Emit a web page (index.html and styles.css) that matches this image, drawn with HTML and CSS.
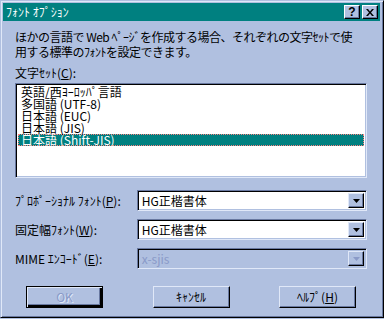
FILE: index.html
```html
<!DOCTYPE html>
<html lang="ja">
<head>
    <meta charset="UTF-8">
    <title>フォント オプション</title>
    <link rel="stylesheet" href="styles.css">
</head>
<body>
    <div class="window">
        <div class="titlebar">
            <span class="title">ﾌｫﾝﾄ ｵﾌﾟｼｮﾝ</span>
            <div class="title-buttons">
                <div class="tbtn help">?</div>
                <div class="tbtn">
                    <svg width="8" height="7" viewBox="0 0 8 7">
                        <path d="M0 0h2l2 2.5 2-2.5h2l-3 3.5 3 3.5h-2l-2-2.5-2 2.5h-2l3-3.5z" fill="#000"/>
                    </svg>
                </div>
            </div>
        </div>

        <div class="content">
            <p class="desc">ほかの言語で Web ﾍﾟｰｼﾞを作成する場合、それぞれの文字ｾｯﾄで使<br>用する標準のﾌｫﾝﾄを設定できます。</p>

            <div class="label">文字ｾｯﾄ(<u>C</u>):</div>
            <div class="listbox">
                <div class="item">英語/西ﾖｰﾛｯﾊﾟ言語</div>
                <div class="item">多国語 (UTF-8)</div>
                <div class="item">日本語 (EUC)</div>
                <div class="item">日本語 (JIS)</div>
                <div class="item selected">日本語 (Shift-JIS)</div>
            </div>

            <div class="rows">
                <div class="row">
                    <span class="row-label">ﾌﾟﾛﾎﾟｰｼｮﾅﾙ ﾌｫﾝﾄ(<u>P</u>):</span>
                    <div class="combo">
                        <span class="combo-value">HG正楷書体</span>
                        <div class="drop">
                            <svg width="7" height="4" viewBox="0 0 7 4"><path d="M0 0h7l-3.5 4z" fill="#000"/></svg>
                        </div>
                    </div>
                </div>
                <div class="row">
                    <span class="row-label">固定幅ﾌｫﾝﾄ(<u>W</u>):</span>
                    <div class="combo">
                        <span class="combo-value">HG正楷書体</span>
                        <div class="drop">
                            <svg width="7" height="4" viewBox="0 0 7 4"><path d="M0 0h7l-3.5 4z" fill="#000"/></svg>
                        </div>
                    </div>
                </div>
                <div class="row">
                    <span class="row-label">MIME ｴﾝｺｰﾄﾞ(<u>E</u>):</span>
                    <div class="combo disabled">
                        <span class="combo-value">x-sjis</span>
                        <div class="drop">
                            <svg width="7" height="4" viewBox="0 0 7 4"><path d="M0 0h7l-3.5 4z" fill="#8a9ac8"/></svg>
                        </div>
                    </div>
                </div>
            </div>

            <div class="buttons">
                <div class="btn default disabled">OK</div>
                <div class="btn">ｷｬﾝｾﾙ</div>
                <div class="btn">ﾍﾙﾌﾟ(<u>H</u>)</div>
            </div>
        </div>
    </div>
</body>
</html>
```

FILE: styles.css
```css
/* Dialog base */
* {
    margin: 0;
    padding: 0;
    box-sizing: border-box;
}

body {
    background: #b0c0e0;
    font-family: "Noto Sans CJK JP", "Liberation Sans", sans-serif;
    font-size: 12px;
    line-height: 14px;
    color: #000;
}

.window {
    width: 384px;
    height: 318px;
    background: #b0c0e0;
    border-style: solid;
    border-width: 1px;
    border-color: #b0c0e0 #000 #000 #b0c0e0;
    box-shadow: inset 1px 1px 0 #e0e8f8, inset -1px -1px 0 #6878a0;
    display: flex;
    flex-direction: column;
    padding: 2px 3px 2px 2px;
    overflow: hidden;
}

/* Title bar */
.titlebar {
    height: 18px;
    flex: none;
    background: #008080;
    color: #fff;
    display: flex;
    align-items: center;
    justify-content: space-between;
    padding: 0 2px 0 3px;
}

.title {
    line-height: 18px;
}

.title-buttons {
    display: flex;
    gap: 2px;
}

.tbtn {
    width: 16px;
    height: 14px;
    background: #b0c0e0;
    border: 1px solid;
    border-color: #fff #000 #000 #fff;
    box-shadow: inset -1px -1px 0 #6878a0;
    display: flex;
    align-items: center;
    justify-content: center;
    color: #000;
}

.tbtn.help {
    font-family: "Liberation Sans", sans-serif;
    font-weight: bold;
    font-size: 12px;
    line-height: 12px;
}

/* Content */
.content {
    flex: 1;
    padding: 0 13px 0 12px;
    display: flex;
    flex-direction: column;
}

.desc {
    margin-top: 8px;
    line-height: 15px;
    white-space: nowrap;
    letter-spacing: -0.5px;
}

.label {
    margin-top: 7px;
    line-height: 14px;
}

.listbox {
    margin-top: 3px;
    height: 95px;
    flex: none;
    background: #fff;
    border: 1px solid;
    border-color: #6878a0 #e0e8f8 #e0e8f8 #6878a0;
    box-shadow: inset 1px 1px 0 #000, inset -1px -1px 0 #b0c0e0;
    padding: 2px;
}

.item {
    height: 12px;
    line-height: 12px;
    padding-left: 3px;
    white-space: nowrap;
}

.item.selected {
    background: #008080;
    color: #fff;
    outline: 1px dotted #ff8080;
    outline-offset: -1px;
}

/* Combo rows */
.rows {
    margin-top: 12px;
    display: flex;
    flex-direction: column;
    gap: 8px;
}

.row {
    display: flex;
    align-items: center;
}

.row-label {
    width: 122px;
    white-space: nowrap;
}

.combo {
    width: 231px;
    height: 21px;
    background: #fff;
    border: 1px solid;
    border-color: #6878a0 #e0e8f8 #e0e8f8 #6878a0;
    box-shadow: inset 1px 1px 0 #000, inset -1px -1px 0 #b0c0e0;
    display: flex;
    align-items: center;
    justify-content: space-between;
    padding: 2px;
}

.combo-value {
    padding-left: 2px;
    line-height: 15px;
}

.combo.disabled {
    background: #b0c0e0;
}

.combo.disabled .combo-value {
    color: #8a9ac8;
}

.drop {
    width: 16px;
    height: 15px;
    background: #b0c0e0;
    border: 1px solid;
    border-color: #e0e8f8 #000 #000 #e0e8f8;
    box-shadow: inset -1px -1px 0 #6878a0;
    display: flex;
    align-items: center;
    justify-content: center;
}

/* Bottom buttons */
.buttons {
    margin-top: 17px;
    padding: 0 11px;
    display: flex;
    justify-content: space-between;
}

.btn {
    width: 77px;
    height: 22px;
    background: #b0c0e0;
    border: 1px solid;
    border-color: #e0e8f8 #000 #000 #e0e8f8;
    box-shadow: inset -1px -1px 0 #6878a0;
    display: flex;
    align-items: center;
    justify-content: center;
    line-height: 14px;
}

.btn.default {
    border: 1px solid #000;
    box-shadow: inset 1px 1px 0 #e0e8f8, inset -2px -2px 0 #000, inset -3px -3px 0 #6878a0;
}

.btn.disabled {
    color: #8a9ac8;
    text-shadow: 1px 1px 0 #e0e8f8;
}
```
